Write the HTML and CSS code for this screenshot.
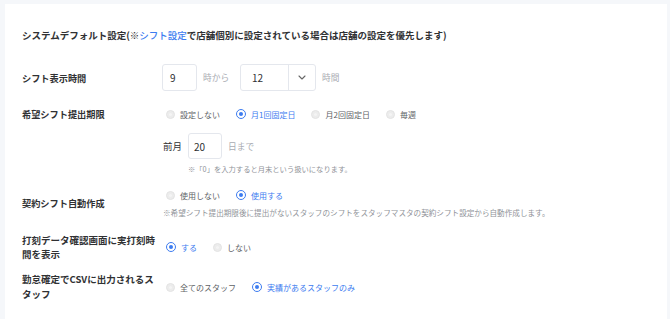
FILE: index.html
```html
<!DOCTYPE html>
<html lang="ja">
<head>
<meta charset="utf-8">
<link rel="stylesheet" href="styles.css">
</head>
<body>
<div class="card">
  <h2 class="title">システムデフォルト設定(※<span class="link">シフト設定</span>で店舗個別に設定されている場合は店舗の設定を優先します)</h2>

  <div class="row row-time">
    <div class="label">シフト表示時間</div>
    <div class="content inline">
      <div class="input w35"><span class="val pl7">9</span></div>
      <span class="unit">時から</span>
      <div class="select">
        <span class="val pl11">12</span>
        <span class="sel-btn"><svg width="8" height="5" viewBox="0 0 8 5"><path d="M1 1 L4 4 L7 1" fill="none" stroke="#666" stroke-width="1.1" stroke-linecap="round" stroke-linejoin="round"/></svg></span>
      </div>
      <span class="unit">時間</span>
    </div>
  </div>

  <div class="row row-deadline">
    <div class="label">希望シフト提出期限</div>
    <div class="content">
      <div class="radios">
        <span class="opt"><i class="radio off"></i>設定しない</span>
        <span class="opt on"><i class="radio checked"></i>月1回固定日</span>
        <span class="opt"><i class="radio off"></i>月2回固定日</span>
        <span class="opt"><i class="radio off"></i>毎週</span>
      </div>
    </div>
  </div>

  <div class="sub">
    <div class="inline">
      <span class="pre">前月</span>
      <div class="input w34"><span class="val pl6">20</span></div>
      <span class="unit">日まで</span>
    </div>
    <p class="note note-sub">※「0」を入力すると月末という扱いになります。</p>
  </div>

  <div class="row row-contract">
    <div class="label">契約シフト自動作成</div>
    <div class="content">
      <div class="radios">
        <span class="opt"><i class="radio off"></i>使用しない</span>
        <span class="opt on"><i class="radio checked"></i>使用する</span>
      </div>
      <p class="note note-contract">※希望シフト提出期限後に提出がないスタッフのシフトをスタッフマスタの契約シフト設定から自動作成します。</p>
    </div>
  </div>

  <div class="row row-punch">
    <div class="label two">打刻データ確認画面に実打刻時間を表示</div>
    <div class="content">
      <div class="radios">
        <span class="opt on"><i class="radio checked"></i>する</span>
        <span class="opt"><i class="radio off"></i>しない</span>
      </div>
    </div>
  </div>

  <div class="row row-csv">
    <div class="label two lh15">勤怠確定でCSVに出力されるスタッフ</div>
    <div class="content">
      <div class="radios">
        <span class="opt"><i class="radio off"></i>全てのスタッフ</span>
        <span class="opt on"><i class="radio checked"></i>実績があるスタッフのみ</span>
      </div>
    </div>
  </div>
</div>
</body>
</html>
```

FILE: styles.css
```css
html, body {
  margin: 0;
  padding: 0;
}
body {
  background: #f5f7fa;
  font-family: "Noto Sans CJK JP", "Noto Sans", sans-serif;
  width: 670px;
  height: 319px;
  overflow: hidden;
}
.card {
  background: #fff;
  margin: 4px 3px 0 5px;
  padding: 22px 17px 0 17px;
  height: 315px;
  box-sizing: border-box;
  overflow: hidden;
}
.title {
  margin: 0;
  font-size: 9.5px;
  line-height: 18px;
  font-weight: 700;
  color: #303133;
}
.link {
  color: #3d7cf0;
  font-weight: 500;
}
.row {
  display: flex;
  align-items: center;
}
.label {
  width: 140px;
  flex: none;
  font-size: 9.2px;
  font-weight: 700;
  color: #303133;
  line-height: 14px;
}
.label.two {
  width: 136px;
  margin-right: 4px;
  font-size: 9.5px;
}
.label.lh15 {
  line-height: 15px;
}
.content {
  flex: 1;
}
.inline {
  display: flex;
  align-items: center;
}
.row-time {
  margin-top: 20px;
  height: 27px;
}
.input {
  height: 27px;
  border: 1px solid #e4e7ed;
  border-radius: 3px;
  box-sizing: border-box;
  display: flex;
  align-items: center;
}
.w35 { width: 35px; }
.w34 { width: 34px; height: 26px; }
.val {
  font-size: 10px;
  color: #303133;
}
.pl7 { padding-left: 7px; }
.pl6 { padding-left: 5px; }
.pl11 { padding-left: 11px; }
.unit {
  font-size: 8.7px;
  color: #a8abb2;
  margin: 0 11px 0 6px;
}
.select {
  width: 76px;
  height: 27px;
  border: 1px solid #e4e7ed;
  border-radius: 3px;
  box-sizing: border-box;
  display: flex;
  align-items: center;
  justify-content: space-between;
}
.sel-btn {
  width: 26px;
  height: 100%;
  border-left: 1px solid #e4e7ed;
  display: flex;
  align-items: center;
  justify-content: center;
}
.radios {
  display: flex;
  align-items: center;
  height: 16px;
  padding-left: 4px;
}
.opt {
  display: inline-flex;
  align-items: center;
  font-size: 8px;
  color: #606266;
  margin-right: 16px;
  white-space: nowrap;
}
.opt.on {
  color: #3d7cf0;
}
.radio {
  width: 9px;
  height: 9px;
  border-radius: 50%;
  box-sizing: border-box;
  margin-right: 5px;
  position: relative;
  flex: none;
}
.radio.off {
  background: #ececec;
  border: 1px solid #e4e4e4;
}
.radio.off::after {
  content: "";
  position: absolute;
  left: 2px;
  top: 2px;
  width: 3px;
  height: 3px;
  border-radius: 50%;
  background: #f4f4f4;
}
.radio.checked {
  width: 10px;
  height: 10px;
  border: 1.5px solid #3d7cf0;
  background: #fff;
  margin-right: 5px;
}
.radio.checked::after {
  content: "";
  position: absolute;
  left: 1.5px;
  top: 1.5px;
  width: 4px;
  height: 4px;
  border-radius: 50%;
  background: #3d7cf0;
}
.row-deadline {
  margin-top: 15px;
}
.sub {
  margin-left: 140px;
  margin-top: 11px;
}
.pre {
  font-size: 9.5px;
  color: #303133;
  margin: 0 6px 0 1px;
}
.note {
  margin: 0;
  font-size: 7.3px;
  line-height: 12px;
  color: #909399;
}
.note-sub {
  margin-top: 4px;
  padding-left: 26px;
}
.row-contract {
  margin-top: 12px;
}
.note-contract {
  margin-top: 4px;
  font-size: 7.6px;
  margin-left: 1px;
}
.row-punch {
  margin-top: 14px;
}
.row-csv {
  margin-top: 11px;
}
```
